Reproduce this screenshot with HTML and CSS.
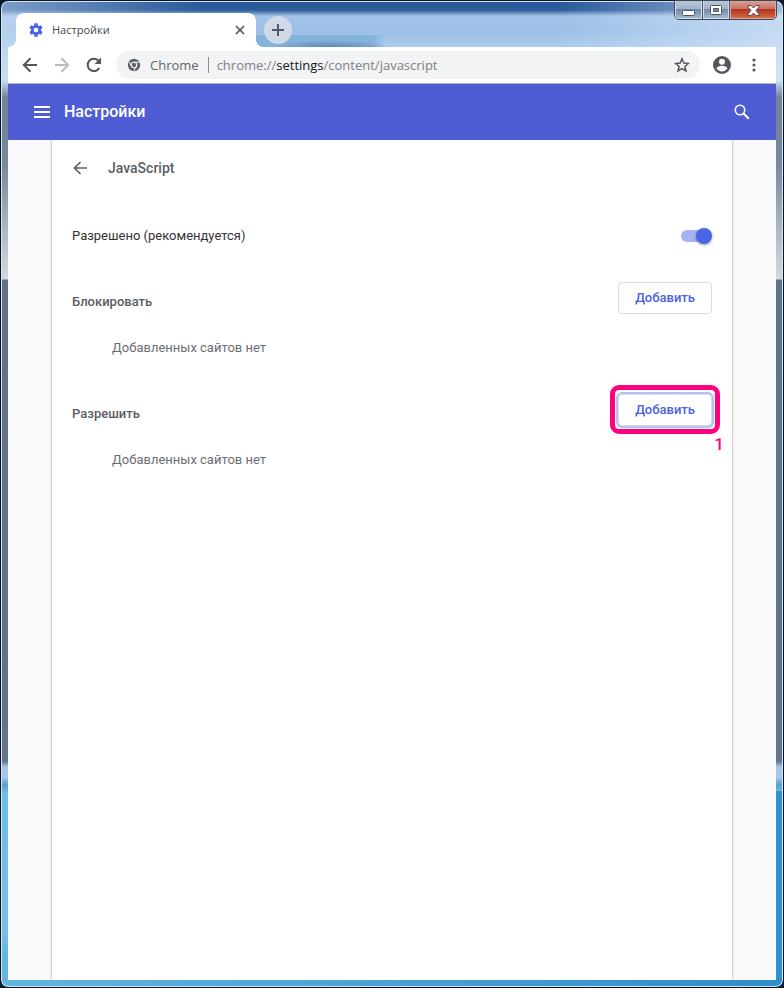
FILE: index.html
```html
<!DOCTYPE html>
<html lang="ru">
<head>
<meta charset="utf-8">
<title>Настройки</title>
<link rel="stylesheet" href="styles.css">
</head>
<body>
<div class="window">
  <div class="titlebar">
    <div class="tab">
      <svg class="tab-icon" width="16" height="16" viewBox="0 0 24 24" aria-hidden="true"><path fill="#4a66e8" d="M19.430 12.980c.04-.32.07-.64.07-.98s-.03-.66-.07-.98l2.110-1.650c.19-.15.24-.42.12-.64l-2-3.460c-.12-.22-.39-.3-.61-.22l-2.490 1c-.52-.4-1.080-.73-1.690-.98l-.38-2.650C14.460 2.180 14.250 2 14 2h-4c-.25 0-.46.18-.49.42l-.38 2.650c-.61.25-1.170.59-1.690.98l-2.490-1c-.23-.09-.49 0-.61.22l-2 3.460c-.13.22-.07.49.12.64l2.110 1.650c-.04.32-.07.65-.07.98s.03.66.07.98l-2.110 1.650c-.19.15-.24.42-.12.64l2 3.460c.12.22.39.3.61.22l2.490-1c.52.4 1.080.73 1.690.98l.38 2.650c.03.24.24.42.49.42h4c.25 0 .46-.18.49-.42l.38-2.650c.61-.25 1.170-.59 1.690-.98l2.490 1c.23.09.49 0 .61-.22l2-3.460c.12-.22.07-.49-.12-.64zM12 15.500a3.500 3.500 0 1 1 0-7 3.500 3.500 0 0 1 0 7z"/></svg>
      <span class="tab-title">Настройки</span>
      <button class="plain tab-close" aria-label="Закрыть вкладку"><svg width="10" height="10" viewBox="0 0 10 10"><path d="M1 1l8 8M9 1L1 9" stroke="#4f5358" stroke-width="1.600"/></svg></button>
    </div>
    <button class="plain new-tab" aria-label="Новая вкладка"><svg width="12" height="12" viewBox="0 0 12 12"><path d="M6 0v12M0 6h12" stroke="#4c5c68" stroke-width="2"/></svg></button>
    <div class="caption">
      <button class="cap cap-min" aria-label="Свернуть"><svg width="13" height="6" viewBox="0 0 13 6"><rect x=".5" y=".5" width="12" height="5" rx="1" fill="#fff" stroke="#4d586b"/></svg></button>
      <button class="cap" aria-label="Развернуть"><svg width="12" height="10" viewBox="0 0 12 10"><path fill="#fff" fill-rule="evenodd" stroke="#4d586b" d="M1.500.5h9a1 1 0 0 1 1 1v7a1 1 0 0 1-1 1h-9a1 1 0 0 1-1-1v-7a1 1 0 0 1 1-1zM3.500 3.500v3h5v-3z"/></svg></button>
      <button class="cap cap-close" aria-label="Закрыть"><svg width="13" height="11" viewBox="0 0 13 11"><path d="M1 .5h3l2.500 2.500L9 .5h3v1.500L9 5.500l3 3.500v1.500H9L6.500 8 4 10.500H1V9l3-3.500L1 2z" fill="#fff" stroke="#5e4450"/></svg></button>
    </div>
  </div>
  <div class="toolbar">
    <button class="plain nav" aria-label="Назад"><svg width="16" height="16" viewBox="0 0 16 16"><path d="M15 8H2M8.500 1.300L1.800 8l6.700 6.700" fill="none" stroke="#54585d" stroke-width="2"/></svg></button>
    <button class="plain nav" aria-label="Вперёд"><svg width="16" height="16" viewBox="0 0 16 16"><path d="M1 8h13M7.500 1.300L14.200 8l-6.700 6.700" fill="none" stroke="#babcbe" stroke-width="2"/></svg></button>
    <button class="plain nav" aria-label="Обновить"><svg width="16" height="16" viewBox="0 0 16 16"><path d="M13.300 11A6.200 6.200 0 1 1 12.500 3.700" fill="none" stroke="#54585d" stroke-width="2"/><path d="M15 .5V7H8.500z" fill="#54585d"/></svg></button>
    <div class="omnibox">
      <svg width="14" height="14" viewBox="0 0 14 14" aria-hidden="true"><circle cx="7" cy="7" r="6.200" fill="#5f6368"/><circle cx="7" cy="7" r="2.700" fill="#5f6368" stroke="#f1f3f4" stroke-width="1.100"/><path d="M7 4.200h6M4.600 8.400L1.800 3.400M9.400 8.400L6.500 13.300" stroke="#f1f3f4" stroke-width="1"/></svg>
      <span class="chip">Chrome</span>
      <div class="url" role="textbox" aria-label="Адрес">chrome://<b>settings</b>/content/javascript</div>
      <button class="plain star" aria-label="В закладки"><svg width="16" height="16" viewBox="0 0 16 16"><path d="M8 1.800l1.800 4.300 4.600.4-3.500 3 1.100 4.500L8 11.600 4 14l1.100-4.500-3.500-3 4.600-.4z" fill="none" stroke="#54585d" stroke-width="1.500"/></svg></button>
    </div>
    <button class="plain profile" aria-label="Профиль"><svg width="18" height="18" viewBox="2 2 20 20"><path fill="#54585d" d="M12 2a10 10 0 1 0 0 20 10 10 0 0 0 0-20zm0 3a3.300 3.300 0 1 1 0 6.600A3.300 3.300 0 0 1 12 5zm0 14.200c-2.500 0-4.700-1.300-6-3.200 0-2 4-3.100 6-3.100s6 1.100 6 3.100a7.200 7.200 0 0 1-6 3.200z"/></svg></button>
    <button class="plain menu" aria-label="Меню"><svg width="4" height="14" viewBox="0 0 4 14" fill="#54585d"><circle cx="2" cy="2" r="1.600"/><circle cx="2" cy="7" r="1.600"/><circle cx="2" cy="12" r="1.600"/></svg></button>
  </div>
  <header class="app-header">
    <button class="plain" aria-label="Главное меню"><svg width="16" height="12" viewBox="0 0 16 12" fill="#fff"><path d="M0 0h16v2H0zM0 5h16v2H0zM0 10h16v2H0z"/></svg></button>
    <h1>Настройки</h1>
    <button class="plain search" aria-label="Поиск"><svg width="16" height="16" viewBox="0 0 16 16" fill="none" stroke="#fff"><circle cx="6" cy="6" r="4.700" stroke-width="1.600"/><path d="M9.500 9.500l5.300 5.300" stroke-width="2"/></svg></button>
  </header>
  <div class="page">
    <main class="card">
      <div class="subheader">
        <button class="plain" aria-label="Назад"><svg width="16" height="16" viewBox="0 0 16 16"><path d="M15 8H2.500M8.500 2L2.500 8l6 6" fill="none" stroke="#5a5e63" stroke-width="1.700"/></svg></button>
        <h2 class="page-title">JavaScript</h2>
      </div>
      <div class="toggle-row">
        <label for="js">Разрешено (рекомендуется)</label>
        <input class="switch" type="checkbox" role="switch" id="js" checked>
      </div>
      <section>
        <div class="section-head"><h2>Блокировать</h2><button class="add">Добавить</button></div>
        <p>Добавленных сайтов нет</p>
      </section>
      <section>
        <div class="section-head"><h2>Разрешить</h2>
          <div class="callout"><button class="add focused">Добавить</button><span class="mark">1</span></div>
        </div>
        <p>Добавленных сайтов нет</p>
      </section>
    </main>
  </div>
</div>
</body>
</html>
```
FILE: styles.css
```css
* { box-sizing: border-box; }
html { background: #0b1a2c; }
body {
  margin: 0;
  font: 13px/20px Roboto, "Liberation Sans", sans-serif;
  color: #333;
}
h1, h2, p { margin: 0; }
svg { display: block; }
.plain {
  display: grid;
  place-items: center;
  flex: none;
  padding: 0;
  border: 0;
  background: none;
}

/* Window frame */
.window {
  display: flex;
  flex-direction: column;
  min-height: 100vh;
  padding: 2px 7px 7px;
  border: 1px solid #0a1524;
  border-radius: 8px;
  box-shadow: inset 0 0 0 1px #d8e6f4;
  background:
    linear-gradient(90deg, #62b5df, #2f8dcb) bottom / 100% 8px no-repeat,
    linear-gradient(90deg, transparent 50%, #3290ce 50%) 0 790px / 100% 100% no-repeat,
    linear-gradient(90deg, rgba(205, 224, 245, .5), transparent 200px, transparent 560px, rgba(215, 230, 248, .7)) 0 0 / 100% 80px no-repeat,
    linear-gradient(#28579a 0, #2b5c9b 9px, #a3c2e8 15px, #9dbfe6 30px, #abcdf0 46px, #c5dcf5 80px, #748598 96px, #76879a 160px, #d5d9df 278px, #5f7387 279px, #62758a 760px, #a8c8ea 766px, #a8c8ea 776px, #5ca0ca 784px, #6cbee8 792px, #79bfe9 930px, #62b5df 960px);
}
.titlebar {
  display: flex;
  align-items: flex-end;
  height: 44px;
  padding-left: 8px;
  background:
    radial-gradient(closest-side, rgba(70, 105, 150, .6), transparent) 264px 37px / 116px 14px no-repeat,
    linear-gradient(90deg, #84b3dc 90%, transparent) 240px 32px / 138px 12px no-repeat;
}
.tab {
  position: relative;
  display: flex;
  align-items: center;
  width: 240px;
  height: 34px;
  padding: 0 10px 0 12px;
  border-radius: 8px 8px 0 0;
  background: #fff;
}
.tab::before, .tab::after {
  content: "";
  position: absolute;
  bottom: 0;
  width: 8px;
  height: 8px;
}
.tab::before { left: -8px; background: radial-gradient(circle at 0 0, transparent 8px, #fff 8px); }
.tab::after { right: -8px; background: radial-gradient(circle at 100% 0, transparent 8px, #fff 8px); }
.tab-title {
  flex: 1;
  margin-left: 8px;
  font: 11px/16px "Open Sans", "Noto Sans", sans-serif;
  color: #45484c;
}
.tab-close { width: 12px; height: 16px; }
.new-tab {
  width: 28px;
  height: 28px;
  margin: 0 0 3px 8px;
  border-radius: 50%;
  background: #cfd9e7;
}
.caption {
  display: flex;
  align-self: flex-start;
  margin: -3px -1px 0 auto;
  border: 1px solid #3c4858;
  border-radius: 0 0 5px 5px;
  overflow: hidden;
}
.cap {
  display: grid;
  place-items: center;
  width: 26px;
  height: 18px;
  padding: 1px 0 0;
  border: 1px solid #d3deeb;
  border-top: 0;
  background: linear-gradient(#b7c7da 0, #a2b4c9 45%, #7288a3 50%, #a1b9d2);
}
.cap + .cap { box-shadow: -1px 0 #45546a; margin-left: 1px; }
.cap-min { padding-top: 6px; width: 27px; }
.cap.cap-close {
  width: 46px;
  border-color: #dda99e;
  background: linear-gradient(#d9a294 0, #c87462 45%, #b3331d 50%, #d36c47);
}

/* Browser toolbar */
.toolbar {
  display: flex;
  align-items: center;
  height: 37px;
  padding: 0 20px 0 14px;
  border-bottom: 1px solid #b6b4bc;
  background: #fff;
}
.nav { width: 16px; height: 28px; margin-right: 16px; }
.omnibox {
  display: flex;
  align-items: center;
  flex: 1;
  min-width: 0;
  height: 28px;
  margin-left: -2px;
  padding: 0 10px 0 11px;
  border-radius: 14px;
  background: #f1f3f4;
  color: #7e8287;
  font: 13px/20px "Open Sans", "Noto Sans", sans-serif;
}
.chip {
  margin-left: 9px;
  padding-right: 9px;
  border-right: 1px solid #8c9095;
  line-height: 16px;
  color: #63676c;
}
.url {
  flex: 1;
  min-width: 0;
  margin-left: 8px;
  overflow: hidden;
  white-space: nowrap;
}
.url b { font-weight: 400; color: #17181a; }
.profile { width: 18px; margin-left: 13px; }
.menu { width: 4px; margin-left: 21px; }

/* Settings header */
.app-header {
  display: flex;
  align-items: center;
  height: 56px;
  padding: 0 26px;
  background: #505cd3;
  color: #fff;
}
.app-header h1 {
  margin-left: 14px;
  font-size: 16px;
  font-weight: 500;
}
.search { margin-left: auto; }

/* Settings page */
.page {
  display: flex;
  flex: 1;
  justify-content: center;
  background: #f8f9fb;
  overflow: hidden;
}
.card {
  flex: 1;
  max-width: 680px;
  padding: 0 20px;
  background: #fff;
  box-shadow: 0 1px 2px 0 #bcbdbe, 0 0 1px 1px #e0e0e1;
}
.card h2 {
  font-size: 13px;
  font-weight: 500;
  color: #5a5e63;
}
.card .page-title { font-size: 14px; }
.subheader {
  display: flex;
  align-items: center;
  gap: 20px;
  height: 56px;
}
.toggle-row {
  display: flex;
  align-items: center;
  justify-content: space-between;
  height: 80px;
}
.switch {
  position: relative;
  appearance: none;
  width: 32px;
  height: 16px;
  margin: 0;
}
.switch::before {
  content: "";
  position: absolute;
  inset: 2px 3px 2px 1px;
  border-radius: 6px;
  background: #a5b2f3;
}
.switch::after {
  content: "";
  position: absolute;
  top: 0;
  right: 0;
  width: 16px;
  height: 16px;
  border-radius: 50%;
  background: #4a66e8;
  box-shadow: 0 1px 3px rgba(0, 0, 0, .4);
}
section { height: 112px; }
.section-head {
  display: flex;
  align-items: center;
  justify-content: space-between;
  height: 52px;
}
section p {
  padding: 10px 0 10px 40px;
  color: #6a6e73;
}
.add {
  display: block;
  height: 32px;
  margin-bottom: 8px;
  padding: 0 16px;
  border: 1px solid #dadce0;
  border-radius: 4px;
  background: #fff;
  color: #4a62dc;
  font: 500 13px/20px Roboto, "Liberation Sans", sans-serif;
}
.focused { box-shadow: 0 0 0 2px #b7c1f6; }
.callout { position: relative; }
.callout::before {
  content: "";
  position: absolute;
  inset: -9px -8px 0;
  border: 5px solid #ff0080;
  border-radius: 9px;
  pointer-events: none;
}
.mark {
  position: absolute;
  right: -12px;
  top: 40px;
  color: #ff0080;
  font: 500 17px/20px Roboto, sans-serif;
}
```
